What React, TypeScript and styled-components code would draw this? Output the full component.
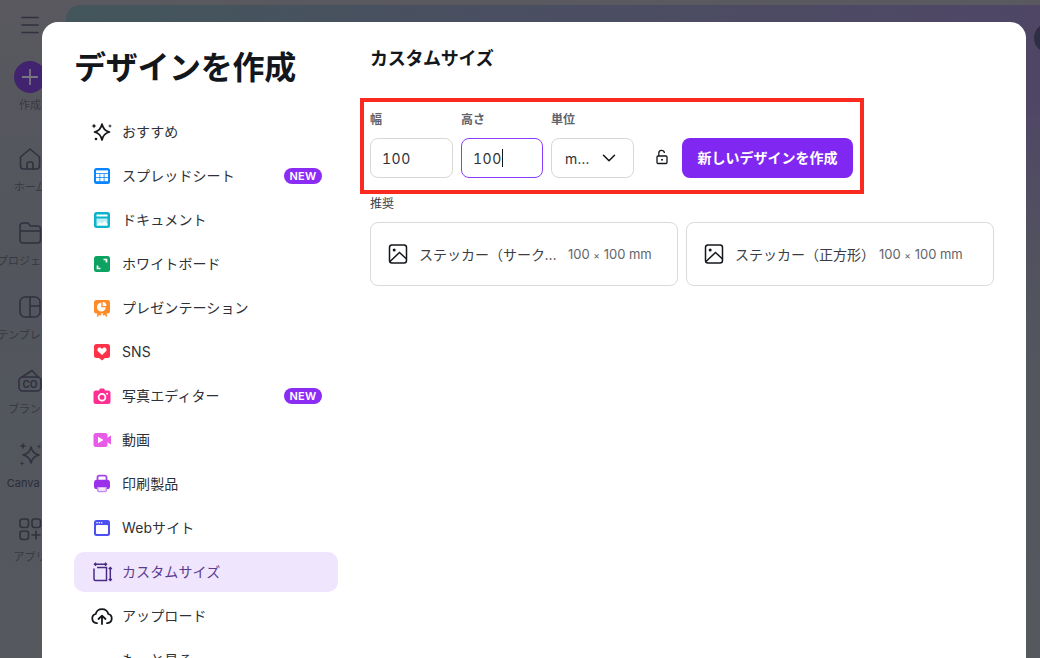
import React from "react";
import styled, { createGlobalStyle } from "styled-components";
import { ChevronDown } from "lucide-react";

const Global = createGlobalStyle`
  html, body { margin: 0; height: 100%; }
  body { overflow: hidden; font-family: Inter, "Noto Sans CJK JP", sans-serif; }
  * { box-sizing: border-box; }
`;
const Page = styled.div`
  position: relative; width: 1040px; height: 658px; overflow: hidden;
  display: flex; background: linear-gradient(#59595f 0%, #52555d 45%, #55595e 100%);
`;
const Rail = styled.nav`
  width: 60px; flex: none; display: flex; flex-direction: column; align-items: center;
  padding-top: 14px; color: #31313f;
`;
const MenuIcon = styled.svg`width: 22px; height: 22px; margin-bottom: 25px; flex: none;`;
const RailPlus = styled.div`
  width: 32px; height: 32px; border-radius: 50%; background: #41236f; color: #777580; flex: none;
  display: flex; align-items: center; justify-content: center;
`;
const RailItem = styled.div`
  display: flex; flex-direction: column; align-items: center; width: 60px; height: 74px;
  white-space: nowrap; flex: none;
`;
const RailIcon = styled.div`
  height: 32px; display: flex; align-items: center; justify-content: center;
`;
const RailLabel = styled.span<{ $strong?: boolean }>`
  font-size: 11px; line-height: 16px; margin-top: 4px;
  color: ${p => (p.$strong ? "#2c2c3c" : "#383841")};
`;
const RailFirst = styled(RailLabel)`margin-bottom: 30px;`;
const Stage = styled.div`flex: 1; padding: 5px 0 0 6px;`;
const Banner = styled.div`
  height: 300px; border-radius: 14px 0 0 0;
  background: linear-gradient(90deg, #43565b 0%, #4a4f61 45%, #4f4666 100%);
  -webkit-mask-image: linear-gradient(#000 30%, transparent);
`;
const Avatar = styled.div`
  position: absolute; left: 1034px; top: 23px; width: 30px; height: 30px; border-radius: 50%;
  background: #2e2e44;
`;
const Modal = styled.div`
  position: absolute; left: 42px; top: 22px; width: 984px; height: 700px;
  background: #fff; border-radius: 16px 16px 0 0; display: flex; padding: 0 32px;
  color: #13171c;
`;
const Left = styled.div`width: 264px; flex: none;`;
const Title = styled.h1`
  margin: 25px 0 0; height: 42px; font-size: 32px; line-height: 42px; font-weight: 700;
  letter-spacing: -0.3px; white-space: nowrap;
`;
const Nav = styled.ul`
  list-style: none; margin: 23px 0 0; padding: 0; display: flex; flex-direction: column; gap: 4px;
`;
const Item = styled.li<{ $active?: boolean }>`
  height: 40px; border-radius: 10px; display: flex; align-items: center; padding: 0 16px 2px;
  background: ${p => (p.$active ? "#efe6fd" : "transparent")};
  color: ${p => (p.$active ? "#5b3a8f" : "#2e3138")};
  font-size: 14px; gap: 8px;
`;
const IconBox = styled.span`
  width: 24px; height: 24px; flex: none; margin-top: 2px; display: flex; align-items: center; justify-content: center;
`;
const ItemLabel = styled.span`flex: 1; white-space: nowrap; letter-spacing: 0.1px;`;
const Badge = styled.span`
  width: 38px; height: 16px; border-radius: 8px; background: #8b2cf5; color: #fff; margin-top: 2px;
  font-size: 11px; font-weight: 600; line-height: 16px; text-align: center; letter-spacing: 0.3px;
`;
const Right = styled.div`flex: 1; margin-left: 32px; min-width: 0;`;
const Heading = styled.h2`
  margin: 23px 0 0; font-size: 18px; line-height: 28px; font-weight: 700; height: 28px; letter-spacing: -0.3px;
`;
const FormBox = styled.div`
  margin: 25px 0 0 -10px; width: 504px; height: 96px; border: 4px solid #fb2a20;
  padding: 6px 0 0 6px; display: flex; align-items: flex-end;
`;
const Field = styled.label<{ $w: number }>`
  width: ${p => p.$w}px; margin-right: 8px; display: flex; flex-direction: column; padding-bottom: 12px;
`;
const FieldLabel = styled.span`
  font-size: 12px; line-height: 18px; font-weight: 600; color: #5f6268; margin-bottom: 9px;
`;
const Input = styled.div<{ $focus?: boolean }>`
  height: 40px; border-radius: 8px; display: flex; align-items: center; padding: 0 11px;
  border: 1px solid ${p => (p.$focus ? "#8b3dff" : "#d5d7db")};
  font-size: 14px; color: #2e3138; letter-spacing: 0.5px; font-variant-numeric: tabular-nums;
`;
const Caret = styled.span`
  display: inline-block; width: 1px; height: 18px; background: #13171c;
`;
const SelectBox = styled(Input)`justify-content: space-between; padding: 0 13px 0 13px; letter-spacing: 0.2px;`;
const LockWrap = styled.div`
  width: 40px; height: 40px; margin: 0 0 13px 0; display: flex; align-items: center; justify-content: center;
`;
const CreateBtn = styled.button`
  width: 171px; height: 40px; margin-bottom: 12px; border: 0; border-radius: 8px; background: #8027f2; color: #fff;
  font: 600 14px Inter, "Noto Sans CJK JP", sans-serif; padding: 0 0 2px;
`;
const Rec = styled.div`
  margin-top: 1px; font-size: 12px; line-height: 18px; color: #3b3e45;
`;
const Cards = styled.div`
  display: grid; grid-template-columns: 308px 308px; gap: 8px; margin-top: 9px;
`;
const Card = styled.div`
  height: 64px; border: 1px solid #d9dadd; border-radius: 8px; display: flex; align-items: center;
  padding: 0 16px; gap: 8px;
`;
const CardName = styled.span`
  font-size: 14px; color: #3a3d44; white-space: nowrap; width: 140px; overflow: hidden; text-overflow: ellipsis; flex: none;
`;
const CardSize = styled.span<{ $gap: number }>`
  font-size: 13px; color: #62656b; white-space: nowrap; margin-left: ${p => p.$gap}px;
`;
const Times = styled.span`font-size: 10px;`;

const ImageGlyph = () => (
  <svg width="24" height="24" viewBox="0 0 24 24" fill="none" stroke="#13171c" strokeWidth="1.5">
    <rect x="2.5" y="3" width="17" height="18" rx="2.5" />
    <circle cx="7.2" cy="8" r="1.5" fill="#13171c" stroke="none" />
    <path d="M3 19.5l9.500-9 7 6.500" />
  </svg>
);

const Sq = ({ c, children }: { c: string; children?: React.ReactNode }) => (
  <svg width="24" height="24" viewBox="0 0 24 24">
    <rect x="4" y="4" width="16" height="16" rx="2.5" fill={c} />
    {children}
  </svg>
);

const icons: Record<string, React.ReactNode> = {
  spark: (
    <svg width="24" height="24" viewBox="0 0 24 24" fill="#13171c">
      <path d="M12 4c.9 4.700 3 7 7.500 8-4.500 1-6.600 3.300-7.500 8-.9-4.700-3-7-7.500-8 4.500-1 6.600-3.300 7.500-8z" fill="none" stroke="#13171c" strokeWidth="1.700" strokeLinejoin="round" />
      <path d="M4 3.500l.8 1.700 1.700.8-1.700.8L4 8.500l-.8-1.700L1.500 6l1.700-.8z" />
      <path d="M20 4l.6 1.400 1.400.6-1.400.6L20 8l-.6-1.400L18 6l1.400-.6z" />
      <circle cx="6" cy="19" r="1.300" />
    </svg>
  ),
  sheet: (
    <Sq c="#0a84ff">
      <g fill="#fff">
        <rect x="6" y="6.400" width="12" height="2.800" /><rect x="6" y="10" width="3.500" height="3" /><rect x="10.300" y="10" width="3.400" height="3" /><rect x="14.500" y="10" width="3.500" height="3" /><rect x="6" y="13.800" width="3.500" height="3.400" /><rect x="10.300" y="13.800" width="3.400" height="3.400" /><rect x="14.500" y="13.800" width="3.500" height="3.400" />
      </g>
    </Sq>
  ),
  doc: (
    <Sq c="#0cb4c9">
      <rect x="6.500" y="6.500" width="11" height="2" fill="#fff" />
      <path d="M6.500 10.500h11v7h-11z" fill="#bdeef3" />
      <path d="M6.500 17.500l3.500-3.500 2 1.500 2.500-2.500 3 3v1.500z" fill="#fff" />
    </Sq>
  ),
  board: (
    <Sq c="#0ba35f">
      <path d="M13.500 7.500h3V10.500M10.500 16.500h-3V13.500" fill="none" stroke="#fff" strokeWidth="1.700" />
    </Sq>
  ),
  pres: (
    <svg width="24" height="24" viewBox="0 0 24 24">
      <rect x="4" y="4" width="16" height="13.500" rx="2.500" fill="#ff8a26" />
      <path d="M8.500 17l-1 3.500M15.500 17l1 3.500M9 17.500l2 1.500M15 17.500l-2 1.500" stroke="#ff8a26" strokeWidth="1.700" fill="none" />
      <path d="M11.300 6.800v4.400h4.400a4.400 4.400 0 11-4.400-4.400z" fill="#fff" />
      <path d="M12.600 6v3.900h3.900a3.900 3.900 0 00-3.900-3.900z" fill="#fff" />
    </svg>
  ),
  sns: (
    <svg width="24" height="24" viewBox="0 0 24 24">
      <path d="M6.500 4h11A2.500 2.500 0 0120 6.500v9a2.500 2.500 0 01-2.500 2.500H15l-3 2.500L9 18H6.500A2.500 2.500 0 014 15.500v-9A2.500 2.500 0 016.500 4z" fill="#ff3348" />
      <path d="M12 15l-4-3.800c-1.800-2.200 1-5 3-3.300l1 1 1-1c2-1.700 4.800 1.100 3 3.300z" fill="#fff" />
    </svg>
  ),
  photo: (
    <svg width="24" height="24" viewBox="0 0 24 24">
      <path d="M6 6.500h3L10 4.500h4l1 2h3a2.500 2.500 0 012.500 2.500v8.500A2.500 2.500 0 0118 20H6a2.500 2.500 0 01-2.500-2.500V9A2.500 2.500 0 016 6.500z" fill="#ff2e93" />
      <circle cx="12" cy="13.300" r="3.400" fill="none" stroke="#fff" strokeWidth="1.800" />
      <circle cx="17.200" cy="9.800" r="1" fill="#fff" />
    </svg>
  ),
  video: (
    <svg width="24" height="24" viewBox="0 0 24 24">
      <rect x="3.500" y="5" width="14" height="14" rx="2.500" fill="#e85be8" />
      <path d="M17 10l4-2.500v9L17 14z" fill="#e85be8" />
      <path d="M8 8.700l5.500 3.300L8 15.300z" fill="#fff" />
    </svg>
  ),
  print: (
    <svg width="24" height="24" viewBox="0 0 24 24">
      <path d="M7.500 8.500V5.500A1.800 1.800 0 019.300 3.700h5.400a1.800 1.800 0 011.800 1.800v3" fill="none" stroke="#a445ea" strokeWidth="1.800" />
      <rect x="4" y="7.800" width="16" height="9.500" rx="3" fill="#9b30ea" />
      <path d="M7 15v3.500A1.800 1.800 0 008.800 20.300h6.400A1.800 1.800 0 0017 18.500V15z" fill="#c98af2" />
      <rect x="8.500" y="15.500" width="7" height="3.300" fill="#fff" opacity=".8" />
    </svg>
  ),
  web: (
    <Sq c="#4d50f0">
      <rect x="6" y="9" width="12" height="9" rx="1" fill="#fff" />
      <circle cx="7" cy="6.800" r=".8" fill="#fff" /><circle cx="9.300" cy="6.800" r=".8" fill="#fff" /><circle cx="11.600" cy="6.800" r=".8" fill="#fff" />
    </Sq>
  ),
  custom: (
    <svg width="24" height="24" viewBox="0 0 24 24" fill="none" stroke="#4b2a85" strokeWidth="1.500">
      <path d="M4 8.500v10.500a1.500 1.500 0 001.500 1.500h11V7.500H7" />
      <path d="M4.500 4.300h12M6 2.800L4.500 4.300 6 5.800M15 2.800l1.500 1.500L15 5.800" />
      <path d="M20.300 7.500v13M18.800 9L20.300 7.500 21.800 9M18.800 19l1.500 1.500 1.500-1.500" />
    </svg>
  ),
  upload: (
    <svg width="24" height="24" viewBox="0 0 24 24" fill="none" stroke="#13171c" strokeWidth="1.800" strokeLinecap="round" strokeLinejoin="round">
      <path d="M7 19.200H6.500A4.700 4.700 0 015.700 10a6.500 6.500 0 0112.600 0 4.700 4.700 0 01-.8 9.200H17" />
      <path d="M12 20v-8M8.500 15l3.500-3.300 3.500 3.300" />
    </svg>
  ),
};

const items = [
  ["spark", "おすすめ"],
  ["sheet", "スプレッドシート", "new"],
  ["doc", "ドキュメント"],
  ["board", "ホワイトボード"],
  ["pres", "プレゼンテーション"],
  ["sns", "SNS"],
  ["photo", "写真エディター", "new"],
  ["video", "動画"],
  ["print", "印刷製品"],
  ["web", "Webサイト"],
  ["custom", "カスタムサイズ", "active"],
  ["upload", "アップロード"],
];

const rs = { fill: "none", stroke: "#31313f", strokeWidth: 1.6, strokeLinecap: "round", strokeLinejoin: "round" } as const;

export default function App() {
  return (
    <Page>
      <Global />
      <Rail>
        <MenuIcon viewBox="0 0 22 22" {...rs}><path d="M3 3.500h16M3 11h16M3 18.500h16" /></MenuIcon>
        <RailPlus>
          <svg width="20" height="20" viewBox="0 0 20 20" stroke="currentColor" strokeWidth="1.800"><path d="M10 2v16M2 10h16" /></svg>
        </RailPlus>
        <RailFirst>作成</RailFirst>
        <RailItem>
          <RailIcon>
            <svg width="24" height="24" viewBox="0 0 24 24" {...rs}><path d="M2.500 10L12 2 21.500 10v9a3 3 0 01-3 3h-13a3 3 0 01-3-3z" /><path d="M9 22v-5a2 2 0 012-2h2a2 2 0 012 2v5" /></svg>
          </RailIcon>
          <RailLabel>ホーム</RailLabel>
        </RailItem>
        <RailItem>
          <RailIcon>
            <svg width="24" height="24" viewBox="0 0 24 24" {...rs}><path d="M2 5a3 3 0 013-3h5l2.500 3h7a3 3 0 013 3v11a3 3 0 01-3 3H5a3 3 0 01-3-3zM2 10h20" /></svg>
          </RailIcon>
          <RailLabel>プロジェクト</RailLabel>
        </RailItem>
        <RailItem>
          <RailIcon>
            <svg width="24" height="24" viewBox="0 0 24 24" {...rs}><rect x="2" y="2" width="20" height="20" rx="5" /><path d="M12 2v20M12 11h10" /></svg>
          </RailIcon>
          <RailLabel>テンプレート</RailLabel>
        </RailItem>
        <RailItem>
          <RailIcon>
            <svg width="26" height="24" viewBox="0 0 26 24" {...rs}>
              <rect x="2" y="8" width="22" height="14" rx="4" />
              <path d="M5 8l10-6.500L21 8" />
              <text x="13" y="18.800" textAnchor="middle" fontSize="10" fontWeight="700" fill="#31313f" stroke="none" fontFamily="Inter, sans-serif">CO</text>
            </svg>
          </RailIcon>
          <RailLabel>ブランド</RailLabel>
        </RailItem>
        <RailItem>
          <RailIcon>
            <svg width="28" height="28" viewBox="0 0 28 28" {...rs}>
              <path d="M15 6c1 5 3 7 8 8-5 1-7 3-8 8-1-5-3-7-8-8 5-1 7-3 8-8z" />
              <path d="M7 1.500l.9 2.600 2.600.9-2.600.9L7 8.500l-.9-2.600L3.500 5l2.600-.9z" fill="#31313f" stroke="none" />
              <path d="M23 3l.6 1.900 1.900.6-1.900.6L23 8l-.6-1.900-1.900-.6 1.900-.6z" fill="#31313f" stroke="none" />
              <path d="M6 20l.6 1.900 1.900.6-1.900.6L6 25l-.6-1.900-1.900-.6 1.900-.6z" fill="#31313f" stroke="none" />
            </svg>
          </RailIcon>
          <RailLabel $strong>Canva AI</RailLabel>
        </RailItem>
        <RailItem>
          <RailIcon>
            <svg width="24" height="24" viewBox="0 0 24 24" {...rs}><rect x="2" y="2" width="8.500" height="8.500" rx="2.500" /><rect x="14" y="2" width="8.500" height="8.500" rx="2.500" /><rect x="2" y="14" width="8.500" height="8.500" rx="2.500" /><path d="M18 14v8M14 18h8" /></svg>
          </RailIcon>
          <RailLabel>アプリ</RailLabel>
        </RailItem>
      </Rail>
      <Stage><Banner /></Stage>
      <Avatar />
      <Modal>
        <Left>
          <Title>デザインを作成</Title>
          <Nav>
            {items.map(([ic, label, flag]) => (
              <Item key={label} $active={flag === "active"}>
                <IconBox>{icons[ic]}</IconBox>
                <ItemLabel>{label}</ItemLabel>
                {flag === "new" && <Badge>NEW</Badge>}
              </Item>
            ))}
            <Item>
              <IconBox />
              <ItemLabel>もっと見る</ItemLabel>
            </Item>
          </Nav>
        </Left>
        <Right>
          <Heading>カスタムサイズ</Heading>
          <FormBox>
            <Field $w={83}><FieldLabel>幅</FieldLabel><Input>100</Input></Field>
            <Field $w={82}><FieldLabel>高さ</FieldLabel><Input $focus>100<Caret /></Input></Field>
            <Field $w={83}>
              <FieldLabel>単位</FieldLabel>
              <SelectBox>m...<ChevronDown size={22} color="#13171c" strokeWidth={1.7} /></SelectBox>
            </Field>
            <LockWrap>
              <svg width="14" height="16" viewBox="0 0 14 16" fill="none" stroke="#13171c" strokeWidth="1.300">
                <rect x="2" y="7" width="10" height="7.500" rx="1" />
                <path d="M3.800 7V4.200a2.800 2.800 0 015.600-.2" />
                <circle cx="7" cy="10.700" r="1" fill="#13171c" stroke="none" />
              </svg>
            </LockWrap>
            <CreateBtn>新しいデザインを作成</CreateBtn>
          </FormBox>
          <Rec>推奨</Rec>
          <Cards>
            <Card>
              <ImageGlyph />
              <CardName>ステッカー（サークル）</CardName>
              <CardSize $gap={1}>100 <Times>×</Times> 100 mm</CardSize>
            </Card>
            <Card>
              <ImageGlyph />
              <CardName>ステッカー（正方形）</CardName>
              <CardSize $gap={-4}>100 <Times>×</Times> 100 mm</CardSize>
            </Card>
          </Cards>
        </Right>
      </Modal>
    </Page>
  );
}
